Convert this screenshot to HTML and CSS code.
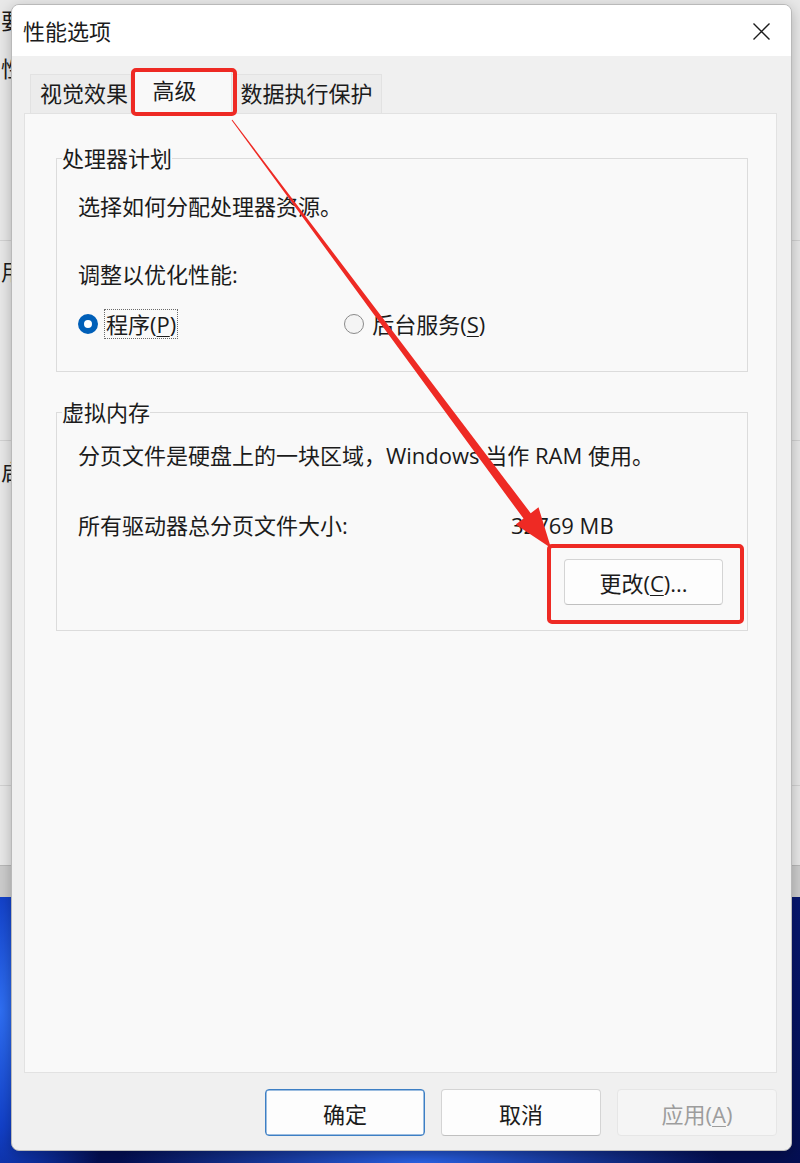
FILE: index.html
```html
<!DOCTYPE html>
<html lang="zh-CN">
<head>
    <meta charset="UTF-8">
    <meta name="viewport" content="width=device-width, initial-scale=1.0">
    <title>性能选项</title>
    <link rel="stylesheet" href="styles.css">
</head>
<body>
<div class="desktop">

    <!-- window behind the dialog (System Properties) -->
    <div class="back-window">
        <div class="back-section back-first">
            <p class="back-line">要进行大多数更改，你必须作为管理员登录。</p>
            <p class="back-line back-perf">性能</p>
        </div>
        <div class="back-section back-profile">
            <p class="back-line">用户配置文件</p>
        </div>
        <div class="back-section back-startup">
            <p class="back-line">启动和故障恢复</p>
        </div>
        <div class="back-section back-env"></div>
        <div class="back-footer"></div>
    </div>

    <div class="dialog">
        <div class="titlebar">
            <span class="title">性能选项</span>
            <span class="close">
                <svg width="17" height="17" viewBox="0 0 17 17">
                    <path d="M0.5 0.5 L16.5 16.5 M16.5 0.5 L0.5 16.5" stroke="#1b1b1b" stroke-width="1.4" fill="none"/>
                </svg>
            </span>
        </div>

        <div class="dialog-body">
            <div class="tabs">
                <div class="tab tab-visual">视觉效果</div>
                <div class="tab tab-advanced active">高级</div>
                <div class="tab tab-dep">数据执行保护</div>
            </div>

            <div class="tab-panel">
                <fieldset class="group group-cpu">
                    <legend>处理器计划</legend>
                    <p class="line first">选择如何分配处理器资源。</p>
                    <p class="line adjust">调整以优化性能:</p>
                    <div class="radios">
                        <label class="radio-item">
                            <span class="radio checked"></span>
                            <span class="radio-text focus">程序(<u>P</u>)</span>
                        </label>
                        <label class="radio-item second">
                            <span class="radio"></span>
                            <span class="radio-text">后台服务(<u>S</u>)</span>
                        </label>
                    </div>
                </fieldset>

                <fieldset class="group group-vm">
                    <legend>虚拟内存</legend>
                    <p class="line first">分页文件是硬盘上的一块区域，Windows 当作 RAM 使用。</p>
                    <div class="size-row">
                        <span>所有驱动器总分页文件大小:</span>
                        <span>32769 MB</span>
                    </div>
                    <div class="change-row">
                        <button class="btn btn-change">更改(<u>C</u>)...</button>
                    </div>
                </fieldset>
            </div>

            <div class="actions">
                <button class="btn btn-default">确定</button>
                <button class="btn">取消</button>
                <button class="btn btn-disabled">应用(<u>A</u>)</button>
            </div>
        </div>
    </div>

    <!-- red annotations -->
    <div class="mark mark-tab"></div>
    <div class="mark mark-change"></div>
    <svg class="arrow" width="800" height="1163" viewBox="0 0 800 1163">
        <polygon points="231.6,120.3 523.5,518.6 515.7,524.5 551,548 538.5,507.3 530.7,513.2 232.4,119.7" fill="#ee2a24"/>
    </svg>
</div>
</body>
</html>
```

FILE: styles.css
```css
body {
    margin: 0;
    padding: 0;
    font-family: "Open Sans", "Noto Sans CJK SC", sans-serif;
    font-size: 22px;
    color: #1b1b1b;
}
p {
    margin: 0;
}
.desktop {
    position: relative;
    width: 800px;
    height: 1163px;
    overflow: hidden;
    background:
        radial-gradient(ellipse 120px 260px at 0px 1010px, #2f6ff2 0%, #1240c8 45%, rgba(10, 30, 140, 0) 100%),
        radial-gradient(ellipse 300px 60px at 420px 1163px, #2a62e6 0%, rgba(20, 50, 180, 0) 100%),
        linear-gradient(180deg, #06186e 0%, #0a1f86 60%, #040f52 100%);
}

/* back window */
.back-window {
    position: absolute;
    left: 0;
    top: 0;
    width: 800px;
    height: 897px;
    background-color: #e8e8e8;
    display: flex;
    flex-direction: column;
}
.back-section {
    padding-top: 15px;
    box-sizing: border-box;
}
.back-first {
    height: 240px;
    padding-top: 5px;
}
.back-profile {
    height: 200px;
    border-top: 1px solid #d2d2d2;
}
.back-startup {
    height: 345px;
    border-top: 1px solid #d2d2d2;
}
.back-env {
    height: 80px;
    border-top: 1px solid #d2d2d2;
}
.back-line {
    width: 10px;
    overflow: hidden;
    line-height: 30px;
    padding-left: 1px;
    white-space: nowrap;
}
.back-perf {
    margin-top: 18px;
}
.back-footer {
    flex: 1;
    background-color: #cccccc;
    border-top: 1px solid #b8b8b8;
}

/* dialog */
.dialog {
    position: absolute;
    left: 11px;
    top: 4px;
    width: 781px;
    height: 1147px;
    box-sizing: border-box;
    border: 1px solid #b9b9b9;
    border-radius: 8px;
    background-color: #f0f0f0;
    box-shadow: 0 4px 14px rgba(0, 0, 0, 0.25);
    overflow: hidden;
    display: flex;
    flex-direction: column;
}
.titlebar {
    height: 51px;
    flex-shrink: 0;
    background-color: #ffffff;
    display: flex;
    align-items: center;
    justify-content: space-between;
    padding: 0 21px 0 11px;
}
.title {
    line-height: 30px;
    margin-top: 1px;
}
.close {
    display: flex;
    width: 17px;
    height: 17px;
    margin-top: 2px;
}
.dialog-body {
    flex: 1;
    display: flex;
    flex-direction: column;
    padding: 14px 14px 0 12px;
}

/* tabs */
.tabs {
    display: flex;
    align-items: flex-end;
    margin-left: 6px;
    position: relative;
    z-index: 2;
    height: 43px;
}
.tab {
    height: 39px;
    box-sizing: border-box;
    border: 1px solid #e2e2e2;
    border-bottom: none;
    background-color: #ececec;
    line-height: 37px;
    text-align: center;
}
.tab-visual {
    width: 101px;
    padding-left: 7px;
}
.tab-advanced {
    width: 101px;
}
.tab-dep {
    width: 150px;
    border-left: none;
}
.tab.active {
    height: 44px;
    margin-bottom: -1px;
    background-color: #f9f9f9;
    line-height: 38px;
    padding-right: 14px;
}
.tab-panel {
    flex: 1;
    background-color: #f9f9f9;
    border: 1px solid #e2e2e2;
    padding: 29px 28px 0 31px;
}

/* group boxes */
.group {
    margin: 0;
    border: 1px solid #dcdcdc;
    padding: 0 21px;
}
.group legend {
    padding: 0;
    margin-left: -16px;
    line-height: 30px;
}
.line {
    line-height: 30px;
}
.group-cpu {
    padding-bottom: 32px;
}
.group-cpu .first {
    margin-top: 18px;
}
.group-cpu .adjust {
    margin-top: 38px;
}
.radios {
    display: flex;
    align-items: center;
    margin-top: 20px;
    height: 30px;
}
.radio-item {
    display: flex;
    align-items: center;
    gap: 6px;
}
.radio-item.second {
    margin-left: 166px;
}
.radio {
    width: 20px;
    height: 20px;
    box-sizing: border-box;
    border-radius: 50%;
    border: 1px solid #8a8a8a;
    background-color: #f4f4f4;
}
.radio.checked {
    border: 6px solid #005fb8;
    background-color: #ffffff;
}
.radio-text {
    line-height: 28px;
    padding: 0 1px;
    border: 1px solid transparent;
}
.radio-text.focus {
    border: 1px dotted #6a6a6a;
}
u {
    text-underline-offset: 3px;
    text-decoration-thickness: 1px;
}

.group-vm {
    margin-top: 25px;
    padding-bottom: 25px;
}
.group-vm .first {
    margin-top: 13px;
}
.size-row {
    display: grid;
    grid-template-columns: 433px auto;
    line-height: 30px;
    margin-top: 40px;
}
.change-row {
    display: flex;
    justify-content: flex-end;
    margin-top: 19px;
    padding-right: 3px;
}

/* buttons */
.btn {
    font-family: "Open Sans", "Noto Sans CJK SC", sans-serif;
    font-size: 22px;
    color: #1b1b1b;
    width: 160px;
    height: 47px;
    box-sizing: border-box;
    background-color: #fdfdfd;
    border: 1px solid #d4d4d4;
    border-bottom-color: #c0c0c0;
    border-radius: 4px;
    padding: 0;
}
.btn-change {
    width: 159px;
    height: 46px;
}
.btn-default {
    border: 1px solid #3d7fc4;
    box-shadow: inset 0 0 0 0.5px #3d7fc4;
}
.btn-disabled {
    color: #9d9d9d;
    background-color: #f5f5f5;
    border-color: #e6e6e6;
}
.actions {
    display: flex;
    justify-content: flex-end;
    gap: 16px;
    padding: 16px 0 14px 0;
}

/* annotations */
.mark {
    position: absolute;
    border: 4px solid #ee2a24;
    border-radius: 5px;
    box-sizing: border-box;
    z-index: 5;
}
.mark-tab {
    left: 131px;
    top: 68px;
    width: 106px;
    height: 48px;
}
.mark-change {
    left: 547px;
    top: 544px;
    width: 197px;
    height: 80px;
}
.arrow {
    position: absolute;
    left: 0;
    top: 0;
    z-index: 6;
}
```
